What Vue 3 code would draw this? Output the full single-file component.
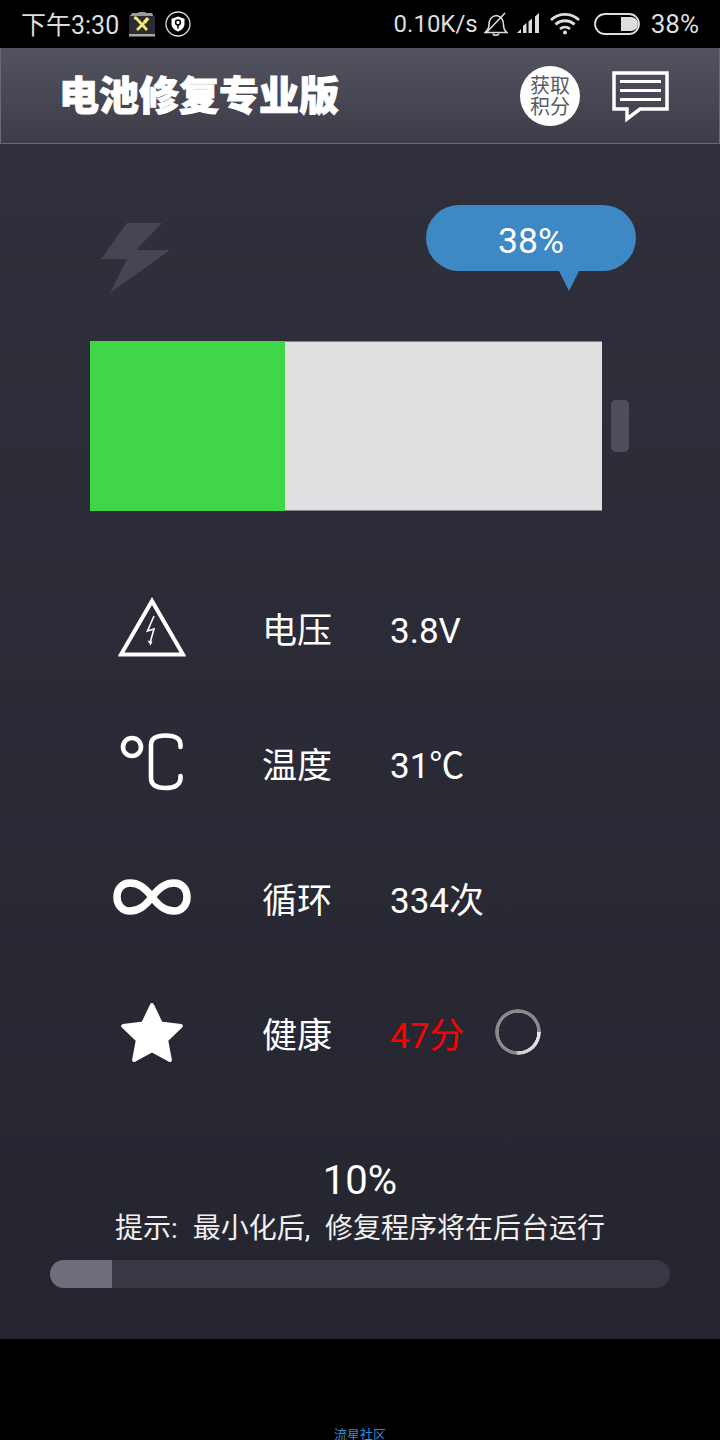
<template>
  <div class="page">
    <!-- system status bar -->
    <div class="status">
      <span class="clock">下午3:30</span>
      <svg class="tools" width="26" height="26" viewBox="0 0 26 26">
        <path d="M2 4l1-2h6l1-1h6l1 1h6l1 2v2H0V5z" fill="#9a9a9a" />
        <rect y="5" width="26" height="18" fill="#2b2b36" />
        <rect y="23" width="26" height="2.500" fill="#a8a8a8" />
        <path d="M7 7l11 12" stroke="#f6ea6e" stroke-width="2.600" fill="none" />
        <path d="M8 19l7-7" stroke="#f6ea6e" stroke-width="2.600" fill="none" />
        <path d="M15 12l4-5" stroke="#f6ea6e" stroke-width="3.600" fill="none" />
        <circle cx="6.500" cy="7" r="1.800" fill="#f6ea6e" />
      </svg>
      <svg class="shield" width="26" height="26" viewBox="0 0 26 26">
        <circle cx="13" cy="13" r="12" fill="none" stroke="#ddd" stroke-width="1.300" />
        <path d="M13 5.500l6.500 2.300v5c0 4-2.800 6.400-6.500 7.700-3.700-1.300-6.500-3.700-6.500-7.700v-5z" fill="#fff" />
        <circle cx="13" cy="11.500" r="2.400" fill="none" stroke="#000" stroke-width="1.500" />
        <path d="M13 14v3.500" stroke="#000" stroke-width="1.500" />
      </svg>
      <span class="status-gap"></span>
      <span class="speed">0.10K/s</span>
      <svg class="bell" width="24" height="24" viewBox="0 0 24 24" fill="none" stroke="#ddd" stroke-width="1.600">
        <path d="M1 20.500h22c-2.500-2-3.500-4.500-3.500-7.500 0-4-1.500-8.500-7-9.500-5 .5-7.500 4.500-7.500 9 0 3.500-1.500 6-4 8z" />
        <path d="M9 21.500c.5 2.500 5 2.500 6 0M2 21L21 1" />
      </svg>
      <svg class="signal" width="23" height="22" viewBox="0 0 23 22" fill="#ddd">
        <path d="M0 20l4-4v4zM6 13l3.500-3v10H6zM11.500 8.500L15 5.500V20h-3.500zM18 3.500L22 0v20h-4z" />
      </svg>
      <svg class="wifi" width="30" height="22" viewBox="0 0 30 22" fill="none" stroke="#ddd" stroke-width="2.800">
        <path d="M1 7c8-7.500 20-7.500 28 0M5.500 11.500c5.500-5 13.500-5 19 0M10 16c3-2.500 7-2.500 10 0" />
        <circle cx="15" cy="19.500" r="2" fill="#ddd" stroke="none" />
      </svg>
      <svg class="cell" width="46" height="22" viewBox="0 0 46 22">
        <rect x="1" y="1" width="44" height="20" rx="10" fill="none" stroke="#ddd" stroke-width="1.800" />
        <path d="M27 4h10a7 7 0 0 1 0 14H27z" fill="#ddd" />
      </svg>
      <span class="level">38%</span>
    </div>

    <!-- app header -->
    <header class="bar">
      <h1 class="title">电池修复专业版</h1>
      <div class="points"><span>获取<br />积分</span></div>
      <svg class="msg" width="57" height="52" viewBox="0 0 57 52" fill="none" stroke="#fff">
        <path d="M2 2h53v36H28L15 48v-10H2z" stroke-width="3.500" />
        <path d="M8 10.500h41M8 19.500h41M8 28.500h41" stroke-width="3" />
      </svg>
    </header>

    <main class="body">
      <div class="top">
        <svg class="bolt" width="70" height="70" viewBox="0 0 70 70">
          <path d="M27 0h35L36 27h34L10 70l17-34H1z" fill="#464552" />
        </svg>
        <div class="bubble">38%</div>
      </div>

      <div class="battery">
        <div class="cells">
          <div class="charge" :style="{ width: level + '%' }"></div>
        </div>
        <div class="nub"></div>
      </div>

      <div class="stats">
        <div class="stat" v-for="s in stats" :key="s.label">
          <div class="stat-icon">
            <svg v-if="s.icon === 'volt'" width="68" height="60" viewBox="0 0 68 60" fill="none" stroke="#fff">
              <path d="M34 4L3 57.500h62z" stroke-width="4" />
              <path d="M36 19l-6.500 15 6.500-2-4 14" stroke-width="1.600" />
              <path d="M29.500 43.500l3 5 2-4z" fill="#fff" stroke="none" />
            </svg>
            <svg v-else-if="s.icon === 'temp'" width="64" height="58" viewBox="0 0 64 58" fill="none" stroke="#fff" stroke-width="4.600" stroke-linecap="round">
              <circle cx="12" cy="14" r="9" />
              <path d="M60.500 14V12C60.500 6 56 2.500 45.500 2.500S31 6 31 12v33c0 6 4.500 10 14.500 10s15-4 15-10v-2" />
            </svg>
            <svg v-else-if="s.icon === 'loop'" width="78" height="36" viewBox="0 0 78 36" fill="none" stroke="#fff" stroke-width="7.500">
              <path d="M39 18C32 9 26 4 17 4 9 4 4 10 4 18s5 14 13 14c9 0 15-5 22-14s13-14 22-14c8 0 13 6 13 14s-5 14-13 14c-9 0-15-5-22-14z" />
            </svg>
            <svg v-else width="66" height="62" viewBox="0 0 66 62">
              <path d="M33 4l8.800 18.500 20 2.600-14.600 14 3.700 19.900L33 49.200 15.100 59l3.700-19.900-14.600-14 20-2.600z" fill="#fff" stroke="#fff" stroke-width="4" stroke-linejoin="round" />
            </svg>
          </div>
          <div class="stat-text">
            <span class="stat-label">{{ s.label }}</span>
            <span class="stat-value" :class="{ bad: s.bad }">{{ s.value }}</span>
          </div>
          <span v-if="s.bad" class="spinner"></span>
        </div>
      </div>

      <div class="repair">
        <div class="percent">{{ progress }}%</div>
        <div class="tip">提示: 最小化后, 修复程序将在后台运行</div>
        <div class="track">
          <div class="fill" :style="{ width: progress + '%' }"></div>
        </div>
      </div>
    </main>

    <footer class="foot">流星社区</footer>
  </div>
</template>

<script setup>
const level = 38
const progress = 10

const stats = [
  { icon: 'volt', label: '电压', value: '3.8V' },
  { icon: 'temp', label: '温度', value: '31℃' },
  { icon: 'loop', label: '循环', value: '334次' },
  { icon: 'star', label: '健康', value: '47分', bad: true },
]
</script>

<style>
html, body {
  background: #000;
}
</style>

<style scoped>
.page {
  width: 720px;
  height: 1440px;
  overflow: hidden;
  display: flex;
  flex-direction: column;
  background: #000;
  color: #fff;
  font-family: Roboto, "Noto Sans CJK SC", sans-serif;
}

.status {
  height: 48px;
  flex: none;
  display: flex;
  align-items: center;
  padding: 0 21px;
  color: #ddd;
  font-size: 24px;
  box-sizing: border-box;
}
.status svg { flex: none; }
.clock { width: 96px; white-space: nowrap; font-size: 25px; margin-top: -2px; }
.tools { margin-left: 12px; }
.shield { margin-left: 10px; }
.status-gap { flex: 1; }
.speed { white-space: nowrap; }
.bell { margin-left: 6px; }
.signal { margin-left: 9px; }
.wifi { margin-left: 10px; }
.cell { margin-left: 14px; }
.level { margin-left: 11px; font-size: 26px; }

.bar {
  height: 96px;
  flex: none;
  box-sizing: border-box;
  display: flex;
  align-items: center;
  padding-left: 58px;
  background: linear-gradient(#53525f, #3d3c48);
  border: 1px solid #6a6974;
  border-top: 0;
}
.title {
  margin: 3px 0 0;
  flex: 1;
  font-size: 40px;
  font-weight: 900;
  line-height: 1;
  color: #fff;
  -webkit-text-stroke: 1px #fff;
  white-space: nowrap;
}
.points {
  width: 60px;
  height: 60px;
  border-radius: 50%;
  background: #fff;
  color: #5a5a64;
  font-size: 20px;
  line-height: 21px;
  text-align: center;
  display: flex;
  align-items: center;
  justify-content: center;
}
.points span { margin-top: 2px; }
.msg {
  margin: 3px 50px 0 32px;
  flex: none;
}

.body {
  height: 1195px;
  flex: none;
  box-sizing: border-box;
  background: linear-gradient(#30303c, #252530);
  padding-top: 61px;
}

.top {
  height: 86px;
  display: flex;
  align-items: flex-start;
  justify-content: space-between;
  padding: 0 84px 0 100px;
}
.bolt { margin-top: 18px; }
.bubble {
  position: relative;
  width: 210px;
  height: 66px;
  border-radius: 33px;
  background: #3e88c5;
  font-size: 35.500px;
  line-height: 72px;
  text-align: center;
}
.bubble::after {
  content: "";
  position: absolute;
  left: 133px;
  top: 66px;
  border-style: solid;
  border-width: 20px 10px 0;
  border-color: #3e88c5 transparent transparent;
}

.battery {
  margin: 50px 0 0 90px;
  display: flex;
  align-items: center;
  gap: 9px;
}
.cells {
  width: 512px;
  height: 170px;
  background: #e0e0e2;
  box-shadow: inset 0 1px #85848c, inset 0 -1px #85848c;
}
.charge {
  height: 100%;
  background: #40d647;
}
.nub {
  width: 18px;
  height: 52px;
  border-radius: 5px;
  background: #4f4e5c;
}

.stats {
  margin-top: 49px;
  padding-left: 110px;
}
.stat {
  height: 135px;
  display: flex;
  align-items: center;
}
.stat-icon {
  width: 84px;
  flex: none;
  display: flex;
  justify-content: center;
  margin-top: -2px;
}
.stat-text {
  display: flex;
  align-items: baseline;
  font-size: 35px;
}
.stat-label {
  margin-left: 68px;
  width: 128px;
  flex: none;
}
.stat-value {
  white-space: nowrap;
}
.stat-value.bad { color: #ff0000; }
.spinner {
  margin: -1px 0 0 31px;
  width: 46px;
  height: 46px;
  border-radius: 50%;
  background: conic-gradient(from 90deg, #e8e8e8 0deg, #cfcfcf 88deg, #8a8a8a 96deg, #8a8a8a 360deg);
  -webkit-mask: radial-gradient(circle, transparent 19px, #000 19.500px);
  mask: radial-gradient(circle, transparent 19px, #000 19.500px);
}

.repair {
  margin-top: 56px;
  padding: 0 50px;
  text-align: center;
}
.percent {
  font-size: 40px;
  line-height: 50px;
}
.tip {
  margin-top: 3px;
  font-size: 28px;
  line-height: 40px;
  word-spacing: 8px;
  color: #f0f0f0;
}
.track {
  margin-top: 11px;
  height: 28px;
  border-radius: 14px;
  overflow: hidden;
  background: #383844;
}
.fill {
  height: 100%;
  background: #6e6d7c;
}

.foot {
  margin-top: auto;
  height: 12px;
  line-height: 13px;
  text-align: center;
  font-size: 13px;
  color: #2a8fd8;
  white-space: nowrap;
}
</style>
